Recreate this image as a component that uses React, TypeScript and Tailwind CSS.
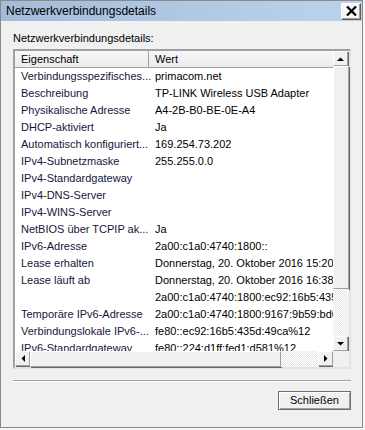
import React from "react";

const rows: [string, string][] = [
  ["Verbindungsspezifisches...", "primacom.net"],
  ["Beschreibung", "TP-LINK Wireless USB Adapter"],
  ["Physikalische Adresse", "A4-2B-B0-BE-0E-A4"],
  ["DHCP-aktiviert", "Ja"],
  ["Automatisch konfiguriert...", "169.254.73.202"],
  ["IPv4-Subnetzmaske", "255.255.0.0"],
  ["IPv4-Standardgateway", ""],
  ["IPv4-DNS-Server", ""],
  ["IPv4-WINS-Server", ""],
  ["NetBIOS über TCPIP ak...", "Ja"],
  ["IPv6-Adresse", "2a00:c1a0:4740:1800::"],
  ["Lease erhalten", "Donnerstag, 20. Oktober 2016 15:20:47"],
  ["Lease läuft ab", "Donnerstag, 20. Oktober 2016 16:38:27"],
  ["", "2a00:c1a0:4740:1800:ec92:16b5:435d:49ca"],
  ["Temporäre IPv6-Adresse", "2a00:c1a0:4740:1800:9167:9b59:bd63:1a2f"],
  ["Verbindungslokale IPv6-...", "fe80::ec92:16b5:435d:49ca%12"],
  ["IPv6-Standardgateway", "fe80::224:d1ff:fed1:d581%12"],
];

const raised =
  "bg-[#f0f0f0] border border-t-white border-l-white border-r-[#a0a0a0] border-b-[#a0a0a0] shadow-[1px_1px_0_#696969]";

const track =
  "bg-[repeating-conic-gradient(#e8e8e8_0_25%,#ffffff_0_50%)] bg-[length:2px_2px]";

function Arrow({ dir }: { dir: "up" | "down" | "left" | "right" }) {
  const pts = {
    up: "0,4 7,4 3.5,0.5",
    down: "0,0 7,0 3.5,3.5",
    left: "4,0 4,7 0.5,3.5",
    right: "0,0 0,7 3.5,3.5",
  }[dir];
  const vert = dir === "up" || dir === "down";
  return (
    <svg width={vert ? 7 : 4} height={vert ? 4 : 7} viewBox={vert ? "0 0 7 4" : "0 0 4 7"}>
      <polygon points={pts} fill="#000" />
    </svg>
  );
}

function ScrollBtn({ dir }: { dir: "up" | "down" | "left" | "right" }) {
  return (
    <div className={`w-[15px] h-[15px] flex items-center justify-center ${raised}`}>
      <Arrow dir={dir} />
    </div>
  );
}

export default function App() {
  return (
    <div className="w-[365px] h-[430px] bg-[#f7f7f7] font-['Liberation_Sans',Arial,sans-serif]">
      <div className="w-[363px] h-[428px] border border-[#8a8a8a] bg-[#f0f0f0] flex flex-col">
        {/* title bar */}
        <div className="h-[20px] flex items-center justify-between pl-[5px] pr-[1px] bg-gradient-to-r from-[#a3bcd8] to-[#bcd3ec]">
          <span className="text-[12px] text-black">Netzwerkverbindungsdetails</span>
          <div className="w-[20px] h-[17px] flex items-center justify-center bg-[#f6f6f6] border border-t-white border-l-white border-r-[#5a5a5a] border-b-[#5a5a5a] shadow-[inset_-1px_-1px_0_#a0a0a0]">
            <svg width="11" height="10" viewBox="0 0 11 10">
              <path d="M1 0.5 L10 9.5 M10 0.5 L1 9.5" stroke="#000" strokeWidth="2.2" />
            </svg>
          </div>
        </div>

        <div className="flex flex-col px-[12px]">
          <div className="mt-[11px] h-[13px] leading-[13px] text-[11px] text-black">
            Netzwerkverbindungsdetails:
          </div>

          {/* list view */}
          <div className="mt-[4px] w-[338px] h-[320px] border-2 border-t-[#a0a0a0] border-l-[#a0a0a0] border-r-[#e3e3e3] border-b-[#e3e3e3] bg-white flex flex-col text-[11px] leading-[13px]">
            <div className="flex h-[300px]">
              <div className="flex-1 overflow-hidden flex flex-col">
                <div className="flex h-[17px] shrink-0 bg-gradient-to-b from-[#f7f7f7] to-[#ececec] border-b border-[#a0a0a0]">
                  <div className="w-[134px] pl-[6px] flex items-center border-r border-[#a0a0a0] text-black">
                    Eigenschaft
                  </div>
                  <div className="flex-1 pl-[6px] flex items-center text-black">Wert</div>
                </div>
                {rows.map(([k, v], i) => (
                  <div key={i} className="flex h-[17px] shrink-0 items-center whitespace-nowrap">
                    <div className="w-[134px] shrink-0 pl-[6px] text-[#16163a]">{k}</div>
                    <div className="pl-[6px] text-black">{v}</div>
                  </div>
                ))}
              </div>
              <div className="w-[16px] flex flex-col">
                <ScrollBtn dir="up" />
                <div className={`h-[223px] ${raised}`} />
                <div className={`flex-1 ${track}`} />
                <ScrollBtn dir="down" />
              </div>
            </div>
            <div className="flex h-[16px]">
              <ScrollBtn dir="left" />
              <div className={`w-[251px] ${raised}`} />
              <div className={`flex-1 ${track}`} />
              <ScrollBtn dir="right" />
              <div className="w-[16px] bg-[#f0f0f0]" />
            </div>
          </div>

          {/* separator */}
          <div className="mt-[11px] w-[338px] h-[2px] border-t border-[#a0a0a0] border-b border-b-white" />

          <div className="flex justify-end mt-[9px] w-[338px]">
            <button className="w-[73px] h-[19px] flex items-center justify-center text-[11px] text-black bg-[#f0f0f0] border border-[#6e6e6e] shadow-[inset_1px_1px_0_#ffffff,inset_-1px_-1px_0_#a0a0a0]">
              Schließen
            </button>
          </div>
        </div>
      </div>
    </div>
  );
}
